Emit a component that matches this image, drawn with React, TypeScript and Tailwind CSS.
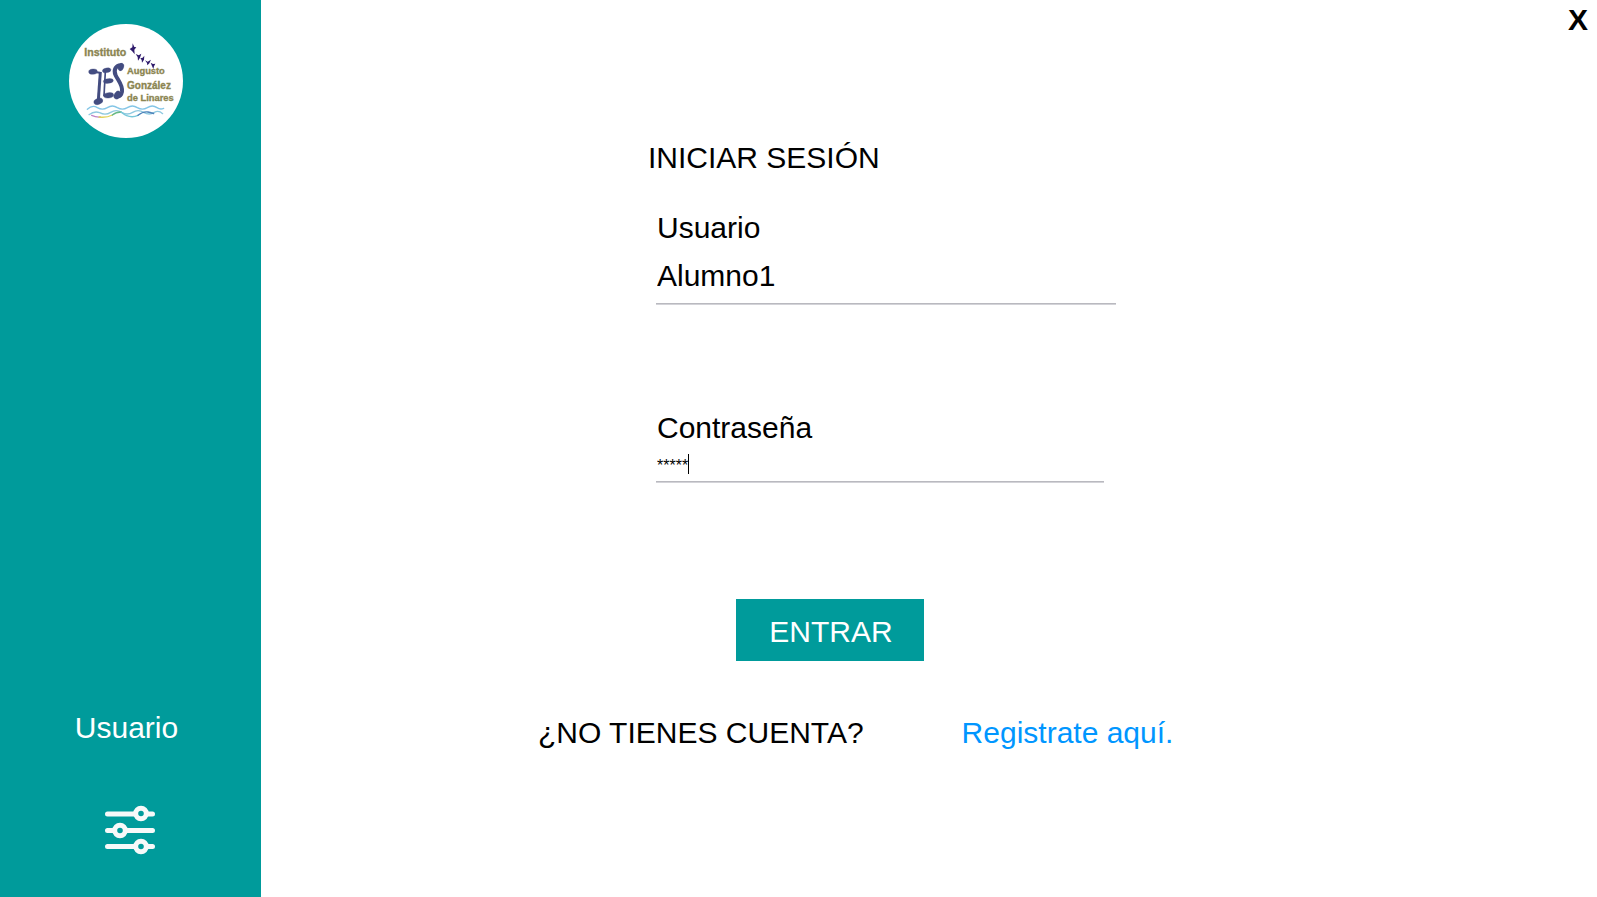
import { useState } from "react";

function Logo() {
  return (
    <svg
      className="size-[114px]"
      viewBox="28 28 342 342"
      role="img"
      aria-label="IES Augusto González de Linares"
    >
      <circle cx="199" cy="199" r="171" fill="#fff" />
      <g
        fill="#8b8551"
        stroke="#8b8551"
        strokeWidth="1"
        fontFamily="'Liberation Sans', Arial, sans-serif"
        fontWeight="700"
      >
        <text x="74" y="125" fontSize="32">Instituto</text>
        <text x="202" y="179" fontSize="28">Augusto</text>
        <text x="202" y="223" fontSize="30">González</text>
        <text x="202" y="260" fontSize="28">de Linares</text>
      </g>
      <g fill="#2e1a6b">
        <path d="M219 86 L224 97 L230 98 L224 105 L225 119 L217 109 L210 103 L218 98Z" />
        <path d="M228 118 L237 122 L245 117 L241 129 L235 138 L234 127Z" />
        <path d="M242 131 L249 129 L254 123 L253 135 L247 144 L246 136Z" />
        <path d="M256 137 L264 141 L274 135 L269 146 L263 152 L262 145Z" />
        <path d="M273 144 L280 148 L287 147 L283 155 L281 163 L277 154Z" />
      </g>
      <g fill="#434c80" stroke="#434c80">
        <path d="M122 172 L116 256" fill="none" strokeWidth="9" />
        <path d="M137 170 L133 244" fill="none" strokeWidth="5" />
        <path
          d="M186 152 C169 150 160 166 168 182 C176 198 190 212 187 231 C185 241 179 246 172 245"
          fill="none"
          strokeWidth="12"
        />
        <ellipse cx="100" cy="171" rx="13" ry="8" transform="rotate(-4 100 171)" />
        <ellipse cx="141" cy="167" rx="13" ry="7" transform="rotate(-12 141 167)" />
        <ellipse cx="184" cy="157" rx="8" ry="12" transform="rotate(20 184 157)" />
        <ellipse cx="146" cy="199" rx="15" ry="7" transform="rotate(-6 146 199)" />
        <ellipse cx="116" cy="260" rx="14" ry="9" transform="rotate(-20 116 260)" />
        <ellipse cx="147" cy="242" rx="15" ry="8" transform="rotate(-6 147 242)" />
        <ellipse cx="173" cy="241" rx="9" ry="13" transform="rotate(30 173 241)" />
        <path d="M98 171 L122 174 M133 199 L150 199 M132 243 L150 243" strokeWidth="6" />
      </g>
      <g fill="none" strokeWidth="4" strokeLinecap="round">
        <path
          d="M83 284 Q98 269 113 279 Q128 288 143 279 Q158 269 173 279 Q188 288 203 279 Q218 269 233 279 Q248 288 263 279 Q278 269 292 279 Q302 286 312 281"
          stroke="#83c5e6"
        />
        <path
          d="M88 300 Q104 288 120 294 Q137 303 153 293 Q170 283 186 293 Q203 303 219 293 Q235 283 252 293 Q269 303 284 293 Q297 286 309 297"
          stroke="#8fc9e0"
        />
        <path d="M96 302 Q108 308 122 307" stroke="#c084c5" />
        <path d="M118 307 Q140 310 158 301" stroke="#e2d35b" />
        <path d="M158 301 Q169 292 184 292" stroke="#67b986" />
        <path d="M184 292 Q210 314 235 302" stroke="#77c8da" />
        <path d="M235 302 Q251 289 265 292 T282 297" stroke="#4d84bb" />
      </g>
    </svg>
  );
}

function SlidersIcon() {
  return (
    <svg className="h-[50px] w-[50px]" viewBox="0 0 50 50" fill="none" aria-hidden="true">
      <g stroke="#f7f9f9" strokeWidth="5" strokeLinecap="round">
        <path d="M2.5 9H30M42 9H47.5" />
        <path d="M2.5 25.5H9M21 25.5H47.5" />
        <path d="M2.5 41.5H30M42 41.5H47.5" />
      </g>
      <g stroke="#f7f9f9" strokeWidth="5">
        <circle cx="36" cy="8.5" r="5.3" />
        <circle cx="15" cy="25.5" r="5.3" />
        <circle cx="36" cy="41.5" r="5.3" />
      </g>
    </svg>
  );
}

const underline = "border-b border-[#b9b9bf] shadow-[0_1px_0_#d3d3d8]";

export default function App() {
  const [user, setUser] = useState("Alumno1");
  const [mask, setMask] = useState("*****");

  return (
    <div className="flex min-h-screen bg-white font-['Liberation_Sans',Arial,sans-serif] text-[30px] leading-9 text-black">
      <aside className="flex w-[261px] shrink-0 flex-col items-center bg-[#009b9b] pt-6 pr-0.5 pb-[42px] text-white">
        <div className="pr-2">
          <Logo />
        </div>
        <p className="mt-auto pr-1.5">Usuario</p>
        <button type="button" aria-label="Ajustes" className="mt-[59px]">
          <SlidersIcon />
        </button>
      </aside>

      <main className="flex grow flex-col">
        <header className="flex justify-end pt-0.5 pr-[9px]">
          <button type="button" aria-label="Cerrar" className="font-bold">
            X
          </button>
        </header>

        <form className="mt-[102px] pl-[277px]" onSubmit={(e) => e.preventDefault()}>
          <h1 className="pl-[110px]">INICIAR SESIÓN</h1>

          <div className="mt-[34px] flex w-[578px] flex-col pl-[118px]">
            <label htmlFor="usuario" className="pl-px">
              Usuario
            </label>
            <input
              id="usuario"
              type="text"
              value={user}
              onChange={(e) => setUser(e.target.value)}
              className={`mt-2 h-[50px] w-full pt-1 pb-2.5 pl-px outline-none ${underline}`}
            />
          </div>

          <div className="mt-[106px] flex w-[566px] flex-col pl-[118px]">
            <label htmlFor="contrasena" className="pl-px">
              Contraseña
            </label>
            <div className="relative mt-1.5">
              <input
                id="contrasena"
                type="text"
                autoComplete="off"
                value={mask}
                onChange={(e) => setMask(e.target.value)}
                className={`block h-[30px] w-full pt-1 pb-1.5 pl-px text-base leading-5 outline-none ${underline}`}
              />
              <span className="absolute top-0.5 left-8 h-5 w-px bg-black" aria-hidden="true" />
            </div>
          </div>

          <button
            type="submit"
            className="mt-[117px] ml-[198px] block h-[62px] w-[188px] bg-[#009b9b] pt-1 pl-0.5 text-white"
          >
            ENTRAR
          </button>

          <div className="mt-[54px] flex gap-[98px]">
            <p>¿NO TIENES CUENTA?</p>
            <a href="#registro" className="text-[#0096ff]">
              Registrate aquí.
            </a>
          </div>
        </form>
      </main>
    </div>
  );
}
